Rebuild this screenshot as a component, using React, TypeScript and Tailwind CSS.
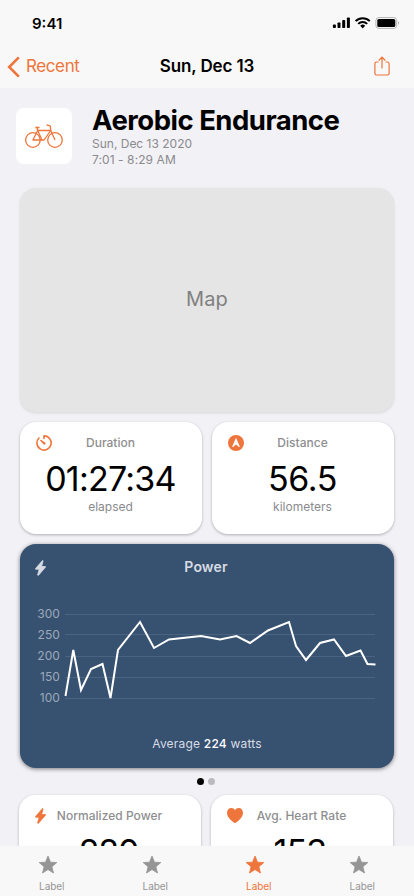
import type { ReactNode } from "react";

const card =
  "rounded-2xl bg-white shadow-[0_1px_3px_rgba(0,0,0,0.28)] overflow-hidden";

function Bolt({ className }: { className: string }) {
  return (
    <svg className={className} width="11" height="16" viewBox="0 0 11 16" fill="currentColor" stroke="currentColor" strokeWidth="0.8" strokeLinejoin="round">
      <path d="M7.500.5.6 8.500V9.200H4.200L2.600 15l.7.5L10.400 7.200V6.500H6.600L8.100.8Z" />
    </svg>
  );
}

function TimerIcon() {
  return (
    <svg width="16" height="16" viewBox="0 0 16 16" fill="none" stroke="#ee753b" strokeWidth="1.6" strokeLinecap="round">
      <path d="M3 3A7.100 7.100 0 1 0 8 .9V3.400" strokeLinejoin="round" />
      <path d="M4.200 4.900 9.200 7.600a1.200 1.200 0 0 1-1.700 1.700Z" fill="#ee753b" stroke="none" />
      <path d="M5 5.500 8.300 8.500" strokeWidth="1.500" />
    </svg>
  );
}

function CompassIcon() {
  return (
    <svg width="16" height="16" viewBox="0 0 16 16">
      <circle cx="8" cy="8" r="8" fill="#ee753b" />
      <path d="M8 2.800 11.700 11.200c.2.6-.3 1-.8.7L8 9.600l-2.900 2.300c-.5.3-1-.1-.8-.7Z" fill="white" />
    </svg>
  );
}

function HeartIcon() {
  return (
    <svg width="16" height="15" viewBox="0 0 16 15" fill="#ee753b">
      <path d="M8 15C7.400 15 0 10.200 0 4.900 0 2 1.900 0 4.300 0 6 0 7.300.9 8 2.300 8.700.9 10 0 11.700 0 14.100 0 16 2 16 4.900 16 10.200 8.600 15 8 15Z" />
    </svg>
  );
}

function StatusIcons() {
  return (
    <svg width="68" height="14" viewBox="0 0 68 14">
      <rect x="0.900" y="8.600" width="3" height="3.400" rx="0.800" />
      <rect x="5.500" y="6.500" width="3" height="5.500" rx="0.800" />
      <rect x="10.200" y="4" width="3" height="8" rx="0.800" />
      <rect x="14.900" y="1.500" width="3" height="10.500" rx="0.800" />
      <g fill="none" stroke="black" strokeWidth="2">
        <path d="M23.600 5.100a10.200 10.200 0 0 1 14.200 0" />
        <path d="M26.200 7.900a6.400 6.400 0 0 1 9 0" />
      </g>
      <path d="M28.200 9.800a3.600 3.600 0 0 1 5 0L30.700 12.400Z" />
      <rect x="43.900" y="1.600" width="20.800" height="10.800" rx="3" fill="none" stroke="#b4b4b4" />
      <rect x="45.300" y="3" width="18" height="8" rx="1.600" />
      <path d="M66 5.200v3.600a2 2 0 0 0 0-3.600Z" fill="#b4b4b4" />
    </svg>
  );
}

function BikeIcon() {
  return (
    <svg width="40" height="26" viewBox="0 0 40 26" fill="none" stroke="#ee753b" strokeWidth="1.300" strokeLinejoin="round">
      <circle cx="8.900" cy="17" r="7.300" />
      <circle cx="31" cy="17" r="7.300" />
      <path d="M8.900 17H20L26.700 7.500H13.700Z" />
      <path d="M11.300 4.500H15.500M13 4.500 13.700 7.500 18 17" />
      <path d="M22.400 1.800 25.600 2.600Q26.300 2.800 26.400 3.700L26.700 7.500 31 17" />
    </svg>
  );
}

interface StatProps {
  icon: ReactNode;
  label: string;
  value: string;
  unit: string;
  valueClass: string;
}

function Stat({ icon, label, value, unit, valueClass }: StatProps) {
  return (
    <section className={`${card} h-28 w-[182px] shrink-0 text-center`}>
      <div className="grid h-[41px] grid-cols-[16px_1fr_16px] items-center px-4">
        <span className="flex justify-center">{icon}</span>
        <h3 className="pr-px text-[12px] font-medium tracking-[0.030px] whitespace-nowrap text-[#8e8e90]">{label}</h3>
      </div>
      <p className={`h-8 text-[34px] leading-[32px] text-black ${valueClass}`}>{value}</p>
      <p className="h-6 pr-px text-[12px] leading-6 text-[#8a8a8d]">{unit}</p>
    </section>
  );
}

const points =
  "65.500,696 73.300,650 81,690 91,669 102.500,664 110.500,698 118,650 140,622 154,648 169,639.500 201,636 220,639.500 236.500,636 250,643 268,630.500 289,622 296,646 306,660 320,643 334,639.500 346,656 360.500,650.500 367.500,664 375.500,664.500";

function PowerChart() {
  return (
    <div className="mt-[22px] flex h-[106px] pl-4">
      <div className="mr-[4px] flex w-[24px] flex-col items-end text-[12px] leading-[21px] tracking-[0.100px] text-[#9ba9b9]">
        {[300, 250, 200, 150, 100].map((n) => (
          <span key={n}>{n}</span>
        ))}
      </div>
      <svg width="314" height="105" viewBox="64 603 314 105">
        {[614.5, 634.5, 656.5, 677.5, 698.5].map((y) => (
          <path key={y} d={`M65 ${y}H375`} stroke="#4a6380" />
        ))}
        <polyline points={points} fill="none" stroke="white" strokeWidth="2" />
      </svg>
    </div>
  );
}

function Tab({ active = false }: { active?: boolean }) {
  return (
    <div className={`flex w-[103.500px] flex-col items-center ${active ? "text-[#ee753b]" : "text-[#959595]"}`}>
      <svg className="mt-[9px] mr-[7px]" width="20" height="20" viewBox="0 0 20 20" fill="currentColor" stroke="currentColor" strokeWidth="0.8" strokeLinejoin="round">
        <path d="M10 1 12.500 7.200 18.900 7.500 13.900 11.700 15.500 18 10 14.600 4.500 18 6.100 11.700 1.100 7.500 7.500 7.200Z" />
      </svg>
      <span className="mt-1 text-[10px] leading-[14px] tracking-[-0.050px]">Label</span>
    </div>
  );
}

export default function App() {
  return (
    <div className="flex h-[896px] w-[414px] flex-col overflow-hidden bg-[#f2f1f6] font-['Inter','Liberation_Sans',sans-serif] antialiased">
      <header className="h-[88px] shrink-0 bg-[#f8f8f8]">
        <div className="flex h-11 items-start justify-between pt-4 pr-[14px] pl-8">
          <span className="text-[15px] leading-4 font-semibold">9:41</span>
          <StatusIcons />
        </div>
        <nav className="grid h-11 grid-cols-[1fr_auto_1fr] items-center pt-px pr-[24px] pl-[7px]">
          <a className="flex items-center gap-[6px] text-[17px] tracking-[-0.400px] text-[#ee753b]">
            <svg width="13" height="22" viewBox="0 0 13 22" fill="none" stroke="currentColor" strokeWidth="2.600">
              <path d="M11.800 1.300 2.200 11l9.600 9.700" />
            </svg>
            Recent
          </a>
          <h1 className="pl-[17px] text-[17px] font-semibold tracking-[-0.100px]">Sun, Dec 13</h1>
          <svg className="-mt-px justify-self-end" width="16" height="20" viewBox="0 0 16 20" fill="none" stroke="#ee753b" strokeWidth="1.200">
            <path d="M4.500 6H2.600A1.700 1.700 0 0 0 .9 7.700v9.600A1.700 1.700 0 0 0 2.600 19h10.800a1.700 1.700 0 0 0 1.700-1.700V7.700A1.700 1.700 0 0 0 13.400 6H11.500M8 12.500V1.300M4.700 4.500 8 1.100 11.300 4.500" />
          </svg>
        </nav>
      </header>

      <main className="min-h-0 flex-1 overflow-hidden px-5">
        <div className="-ml-1 flex h-[100px] gap-5 pt-5">
          <div className="flex h-14 w-14 items-center justify-center rounded-lg bg-white">
            <BikeIcon />
          </div>
          <div className="-mt-1">
            <h2 className="text-[27.500px] leading-8 font-bold tracking-[-0.500px] whitespace-nowrap">Aerobic Endurance</h2>
            <p className="text-[12px] leading-4 text-[#8a8a8d]">Sun, Dec 13 2020</p>
            <p className="text-[12px] leading-4 tracking-[0.080px] text-[#8a8a8d]">7:01 - 8:29 AM</p>
          </div>
        </div>

        <div className="flex h-56 items-center justify-center rounded-2xl bg-[#e5e5e5] pb-[2px] text-[20px] tracking-[0.100px] text-[#808080] shadow-[0_1px_3px_rgba(0,0,0,0.12)]">
          Map
        </div>

        <div className="mt-[10px] flex gap-[10px]">
          <Stat icon={<TimerIcon />} label="Duration" value="01:27:34" unit="elapsed" valueClass="tracking-[-0.750px] pr-px" />
          <Stat icon={<CompassIcon />} label="Distance" value="56.5" unit="kilometers" valueClass="tracking-[-0.400px] pr-px" />
        </div>

        <section className="mt-[10px] h-56 rounded-2xl bg-[#375171] shadow-[0_1px_4px_rgba(0,0,0,0.5)]">
          <div className="grid h-[37px] grid-cols-[12px_1fr_12px] items-end px-[15px] pt-[9px] pb-px">
            <Bolt className="mb-[5px] text-[#d7dce3]" />
            <h3 className="pr-[2px] text-center text-[14px] leading-7 font-semibold tracking-[0.150px] text-[#d7dce3]">Power</h3>
          </div>
          <PowerChart />
          <p className="mt-[27px] text-center text-[12px] leading-4 tracking-[0.200px] text-[#d7dce3]">
            Average <span className="font-medium text-white">224</span> watts
          </p>
        </section>

        <div className="mt-[10px] flex h-[7px] justify-center gap-1 pr-[2px]">
          <span className="h-[7px] w-[7px] rounded-full bg-black" />
          <span className="h-[7px] w-[7px] rounded-full bg-[#bbbabf]" />
        </div>

        <div className="mt-[10px] -ml-px flex gap-[10px]">
          <Stat icon={<Bolt className="mr-[5.500px] shrink-0 text-[#ee753b]" />} label="Normalized Power" value="280" unit="watts" valueClass="tracking-[-1.200px] pr-[3px]" />
          <Stat icon={<HeartIcon />} label="Avg. Heart Rate" value="153" unit="bpm" valueClass="tracking-[-0.800px] pr-[4px]" />
        </div>
      </main>

      <footer className="flex h-[50px] shrink-0 bg-[#f8f8f8]">
        <Tab />
        <Tab />
        <Tab active />
        <Tab />
      </footer>
    </div>
  );
}
